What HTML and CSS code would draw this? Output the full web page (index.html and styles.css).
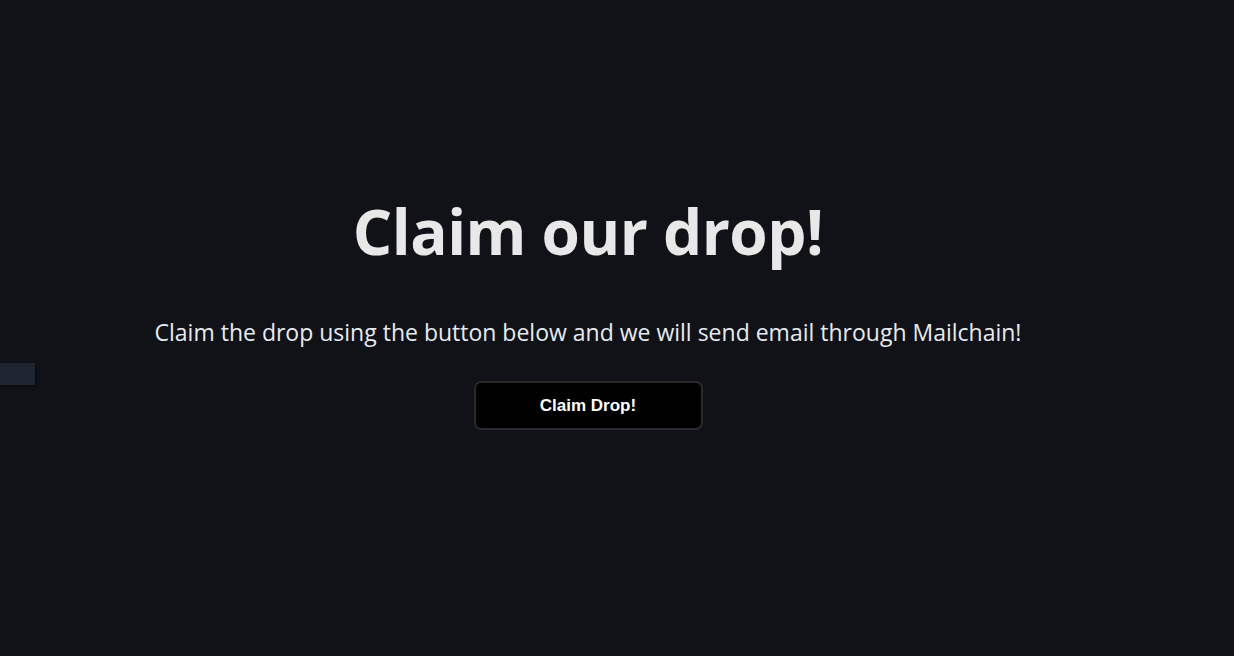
FILE: index.html
```html
<!DOCTYPE html>
<html lang="en">
<head>
<meta charset="utf-8">
<title>Claim our drop!</title>
<link rel="stylesheet" href="styles.css">
</head>
<body>
<div class="side-tab"></div>
<main class="hero">
  <h1 class="title">Claim our drop!</h1>
  <p class="lead">Claim the drop using the button below and we will send email through Mailchain!</p>
  <button class="claim-btn" type="button">Claim Drop!</button>
</main>
</body>
</html>
```

FILE: styles.css
```css
html, body {
  margin: 0;
  padding: 0;
  height: 100%;
}
body {
  background: #101217;
  color: #e8e8e8;
  font-family: "Open Sans", "Noto Sans", sans-serif;
  position: relative;
  overflow: hidden;
}
.side-tab {
  position: absolute;
  left: 0;
  top: 363px;
  width: 35px;
  height: 22px;
  background: #1c2530;
  box-shadow: 1px 1px 3px rgba(0,0,0,0.5);
}
.hero {
  width: 1176px;
  display: flex;
  flex-direction: column;
  align-items: center;
  padding-top: 188px;
}
.title {
  margin: 0;
  font-size: 62px;
  font-weight: 700;
  line-height: 86px;
  color: #e8e8e8;
  letter-spacing: -0.5px;
}
.lead {
  margin: 42px 0 0;
  font-size: 23px;
  line-height: 32px;
  color: #e6ebf0;
}
.claim-btn {
  margin-top: 33px;
  width: 229px;
  height: 49px;
  background: #000;
  color: #fff;
  border: 2px solid #2a2a2c;
  border-radius: 7px;
  font-family: "Liberation Sans", Arial, sans-serif;
  font-weight: 700;
  font-size: 17px;
  cursor: pointer;
}
```
